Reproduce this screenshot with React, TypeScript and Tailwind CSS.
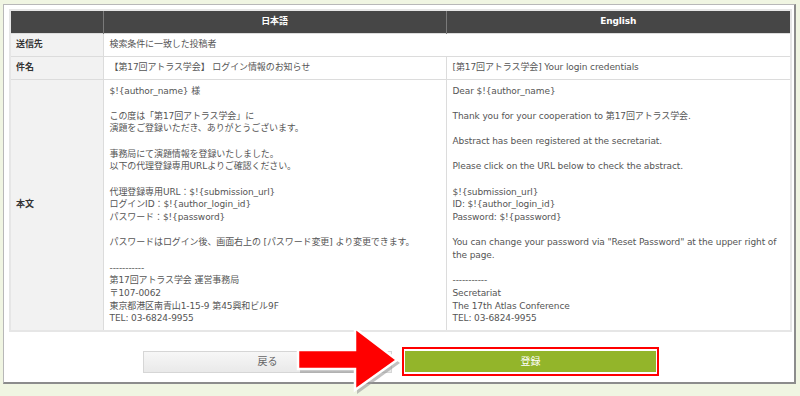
import React from "react";

const jp: string[] = [
  "$!{author_name} 様",
  "",
  "この度は「第17回アトラス学会」に",
  "演題をご登録いただき、ありがとうございます。",
  "",
  "事務局にて演題情報を登録いたしました。",
  "以下の代理登録専用URLよりご確認ください。",
  "",
  "代理登録専用URL：$!{submission_url}",
  "ログインID：$!{author_login_id}",
  "パスワード：$!{password}",
  "",
  "パスワードはログイン後、画面右上の [パスワード変更] より変更できます。",
  "",
  "-----------",
  "第17回アトラス学会 運営事務局",
  "〒107-0062",
  "東京都港区南青山1-15-9 第45興和ビル9F",
  "TEL: 03-6824-9955",
];

const en: string[] = [
  "Dear $!{author_name}",
  "",
  "Thank you for your cooperation to 第17回アトラス学会.",
  "",
  "Abstract has been registered at the secretariat.",
  "",
  "Please click on the URL below to check the abstract.",
  "",
  "$!{submission_url}",
  "ID: $!{author_login_id}",
  "Password: $!{password}",
  "",
  'You can change your password via "Reset Password" at the upper right of',
  "the page.",
  "",
  "-----------",
  "Secretariat",
  "The 17th Atlas Conference",
  "TEL: 03-6824-9955",
];

function Lines({ lines }: { lines: string[] }) {
  return (
    <div>
      {lines.map((l, i) => (
        <div key={i} className="h-[12.67px] leading-[12.67px] whitespace-nowrap">
          {l === "" ? "\u00a0" : l}
        </div>
      ))}
    </div>
  );
}

export default function App() {
  const font = {
    fontFamily: '"DejaVu Sans", "Noto Sans CJK JP", sans-serif',
  };
  return (
    <div
      className="w-[800px] h-[396px] bg-[#f0f5e2] relative overflow-hidden pt-[4px] pl-[3px]"
      style={font}
    >
      <div className="w-[793px] h-[380px] bg-white border-t border-l border-[#b8b8b8] border-r-2 border-b-2 border-r-[#8c8c8c] border-b-[#8c8c8c] pl-[5px] pt-[4px]">
        <table className="w-[781px] table-fixed border-collapse border-2 border-[#e6e6e6] text-[9px] text-[#555] tracking-[-0.1px]">
          <colgroup>
            <col className="w-[93px]" />
            <col className="w-[343px]" />
            <col className="w-[345px]" />
          </colgroup>
          <thead>
            <tr className="h-[23px] bg-[#464646] text-white font-bold">
              <th className="border-r border-[#7a7a7a]"></th>
              <th className="text-center border-r border-[#7a7a7a]">日本語</th>
              <th className="text-center">English</th>
            </tr>
          </thead>
          <tbody>
            <tr className="h-[23px]">
              <td className="bg-[#f2f2f2] border border-[#dcdcdc] pl-[5px] font-bold text-[#333]">送信先</td>
              <td colSpan={2} className="border border-[#dcdcdc] pl-[6px]">検索条件に一致した投稿者</td>
            </tr>
            <tr className="h-[23px]">
              <td className="bg-[#f2f2f2] border border-[#dcdcdc] pl-[5px] font-bold text-[#333]">件名</td>
              <td className="border border-[#dcdcdc] pl-[6px]">【第17回アトラス学会】 ログイン情報のお知らせ</td>
              <td className="border border-[#dcdcdc] pl-[6px]">[第17回アトラス学会] Your login credentials</td>
            </tr>
            <tr className="h-[252px]">
              <td className="bg-[#f2f2f2] border border-[#dcdcdc] pl-[5px] font-bold text-[#333] align-middle">本文</td>
              <td className="border border-[#dcdcdc] pl-[6px] pt-[5px] align-top">
                <Lines lines={jp} />
              </td>
              <td className="border border-[#dcdcdc] pl-[6px] pt-[5px] align-top">
                <Lines lines={en} />
              </td>
            </tr>
          </tbody>
        </table>

        <div className="flex items-center mt-[15px] ml-[134px] gap-[10px]">
          <button className="w-[249px] h-[22px] bg-gradient-to-b from-[#f7f7f7] to-[#e9e9e9] border border-[#d6d6d6] text-[10px] text-[#666]">
            戻る
          </button>
          <div className="border-2 border-[#ff0000] px-[1px] py-[2px]">
            <button className="block w-[251px] h-[21px] bg-[#93b52a] text-white text-[10px]">
              登録
            </button>
          </div>
        </div>
      </div>

      <svg
        className="absolute left-[290px] top-[322px]"
        width="116"
        height="74"
        viewBox="290 322 116 74"
      >
        <polygon
          points="300,353 357,353 357,331 400,363 357,394 357,373 300,373"
          fill="#9a9a9a"
          opacity="0.6"
        />
        <polygon
          points="298,350 355,350 355,328 397,360 355,390 355,369 298,369"
          fill="#ff0000"
          stroke="#ffffff"
          strokeWidth="2.5"
          strokeLinejoin="miter"
        />
      </svg>
    </div>
  );
}
